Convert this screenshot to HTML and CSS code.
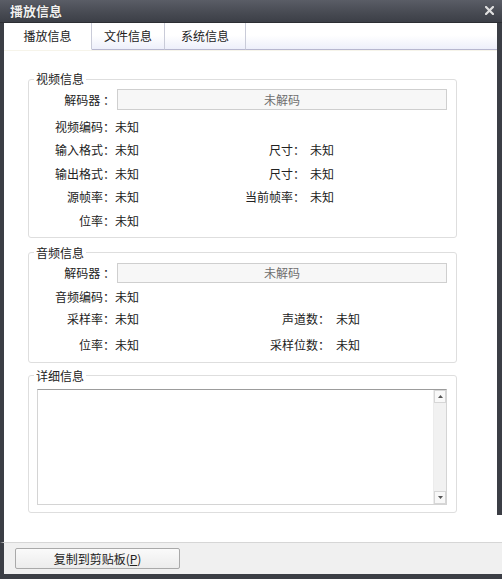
FILE: index.html
```html
<!DOCTYPE html>
<html lang="zh-CN">
<head>
<meta charset="utf-8">
<title>播放信息</title>
<link rel="stylesheet" href="styles.css">
</head>
<body>
<div class="window">
  <div class="titlebar">
    <span class="title">播放信息</span>
    <svg class="close" width="9" height="9" viewBox="0 0 9 9"><path d="M1 1L8 8M8 1L1 8" stroke="#e0e0e0" stroke-width="2.2" stroke-linecap="square"/></svg>
  </div>
  <div class="upper">
    <div class="tabs">
      <div class="tab tab-active t1">播放信息</div>
      <div class="tab t2">文件信息</div>
      <div class="tab t3">系统信息</div>
      <div class="tab-rest"></div>
    </div>
    <div class="panel">
      <fieldset class="group video">
        <legend>视频信息</legend>
        <div class="decoder">
          <span class="lbl">解码器 ：</span>
          <div class="field">未解码</div>
        </div>
        <div class="rows vrows">
          <span class="lbl">视频编码：</span><span class="val">未知</span><span></span><span></span>
          <span class="lbl">输入格式：</span><span class="val">未知</span><span class="lbl">尺寸：</span><span class="val v2">未知</span>
          <span class="lbl">输出格式：</span><span class="val">未知</span><span class="lbl">尺寸：</span><span class="val v2">未知</span>
          <span class="lbl">源帧率：</span><span class="val">未知</span><span class="lbl">当前帧率：</span><span class="val v2">未知</span>
          <span class="lbl">位率：</span><span class="val">未知</span><span></span><span></span>
        </div>
      </fieldset>
      <fieldset class="group audio">
        <legend>音频信息</legend>
        <div class="decoder">
          <span class="lbl">解码器 ：</span>
          <div class="field">未解码</div>
        </div>
        <div class="rows arows">
          <span class="lbl">音频编码：</span><span class="val">未知</span><span></span><span></span>
          <span class="lbl">采样率：</span><span class="val">未知</span><span class="lbl">声道数：</span><span class="val v3">未知</span>
          <span class="lbl">位率：</span><span class="val">未知</span><span class="lbl">采样位数：</span><span class="val v3">未知</span>
        </div>
      </fieldset>
      <fieldset class="group detail">
        <legend>详细信息</legend>
        <div class="textbox">
          <div class="text"></div>
          <div class="scrollbar">
            <div class="sbtn"><svg width="5" height="3" viewBox="0 0 5 3"><path d="M0 3L2.5 0L5 3Z" fill="#555"/></svg></div>
            <div class="track"></div>
            <div class="sbtn"><svg width="5" height="3" viewBox="0 0 5 3"><path d="M0 0L2.5 3L5 0Z" fill="#555"/></svg></div>
          </div>
        </div>
      </fieldset>
    </div>
  </div>
  <div class="gap"></div>
  <div class="footer">
    <button class="btn">复制到剪贴板(<u>P</u>)</button>
  </div>
</div>
</body>
</html>
```

FILE: styles.css
```css
* { box-sizing: border-box; }
html, body {
  margin: 0;
  padding: 0;
}
body {
  width: 502px;
  height: 579px;
  overflow: hidden;
  background: #ffffff;
  font-family: "Noto Sans CJK SC", "Noto Sans", sans-serif;
  font-size: 12px;
  color: #222;
}
.window {
  width: 502px;
  height: 579px;
  display: flex;
  flex-direction: column;
}
.titlebar {
  height: 23px;
  flex: none;
  display: flex;
  align-items: center;
  justify-content: space-between;
  padding: 0 8px 0 10px;
  background: linear-gradient(#5a5d66, #474a52 60%, #3c3f47);
  border-bottom: 1px solid #2c2e33;
}
.title {
  color: #f0f0f0;
  font-size: 13px;
  font-weight: bold;
  line-height: 16px;
  text-shadow: 0 0 1px #222;
}
.close { display: block; margin-top: -1px; }
.upper {
  height: 492px;
  flex: none;
  display: flex;
  flex-direction: column;
  border-left: 4px solid #3b3e45;
  border-right: 5px solid #3b3e45;
  background: #fff;
}
.tabs {
  height: 27px;
  flex: none;
  display: flex;
  background: linear-gradient(#ffffff 0%, #ffffff 45%, #eceefa 100%);
}
.tab {
  height: 27px;
  display: flex;
  align-items: center;
  justify-content: center;
  border-right: 1px solid #c9cbd8;
  border-bottom: 1px solid #b7b7cf;
  color: #222;
  padding-bottom: 1px;
}
.t1 { width: 88px; }
.t2 { width: 73px; }
.t3 { width: 81px; }
.tab-active {
  background: #fff;
  border-bottom-color: #fff;
}
.tab-rest {
  flex: 1;
  border-bottom: 1px solid #b7b7cf;
}
.panel {
  flex: 1;
  padding: 21px 0 0 24px;
  border-top: 1px solid #f6f4ea;
  margin-top: 0;
}
.group {
  margin: 0;
  padding: 0;
  width: 429px;
  border: 1px solid #dedede;
  border-radius: 3px;
  min-width: 0;
}
.group legend {
  margin-left: 5px;
  padding: 0 2px;
  font-size: 12px;
  line-height: 14px;
  color: #222;
}
.decoder {
  display: grid;
  grid-template-columns: 86px 330px;
  column-gap: 2px;
  align-items: center;
  margin-top: 3px;
}
.lbl {
  text-align: right;
  white-space: nowrap;
  line-height: 14px;
}
.field {
  height: 21px;
  border: 1px solid #cfcfcf;
  background: #f7f7f7;
  color: #6e6e6e;
  text-align: center;
  line-height: 19px;
}
.rows {
  display: grid;
  align-items: center;
}
.val { line-height: 14px; white-space: nowrap; }
.vrows {
  grid-template-columns: 86px 100px 90px 1fr;
  grid-auto-rows: 23.5px;
  margin-top: 5px;
  padding-bottom: 4px;
}
.v2 { margin-left: 5px; }
.audio { margin-top: 8px; }
.audio .field { height: 20px; line-height: 18px; }
.arows {
  grid-template-columns: 86px 125px 90px 1fr;
  grid-template-rows: 22px 22px 30px;
  margin-top: 3px;
  padding-bottom: 2px;
}
.v3 { margin-left: 6px; }
.detail { margin-top: 6px; }
.textbox {
  margin: 6px 0 7px 8px;
  width: 410px;
  height: 116px;
  display: flex;
  border: 1px solid #d4d4d4;
  border-top-color: #9c9c9c;
  background: #fff;
}
.text { flex: 1; }
.scrollbar {
  width: 13px;
  display: flex;
  flex-direction: column;
  background: #f1f1f1;
  border-left: 1px solid #ececec;
}
.sbtn {
  height: 13px;
  display: flex;
  align-items: center;
  justify-content: center;
  border: 1px solid #d6d6d6;
  background: #f8f8f8;
}
.track { flex: 1; }
.gap {
  height: 27px;
  flex: none;
  border-left: 4px solid #3b3e45;
  background: #fff;
}
.footer {
  flex: 1;
  border-left: 4px solid #3b3e45;
  border-top: 1px solid #d6d6d6;
  border-bottom: 5px solid #3b3e45;
  background: #f0f0f0;
  padding: 5px 0 0 11px;
}
.btn {
  display: block;
  width: 165px;
  height: 21px;
  margin: 0;
  padding: 0;
  border: 1px solid #a9a9a9;
  border-radius: 2px;
  background: linear-gradient(#fafafa, #ececec);
  font-family: "Noto Sans CJK SC", "Noto Sans", sans-serif;
  font-size: 12px;
  color: #222;
  line-height: 18px;
}
.btn u { text-underline-offset: 1px; }
```
